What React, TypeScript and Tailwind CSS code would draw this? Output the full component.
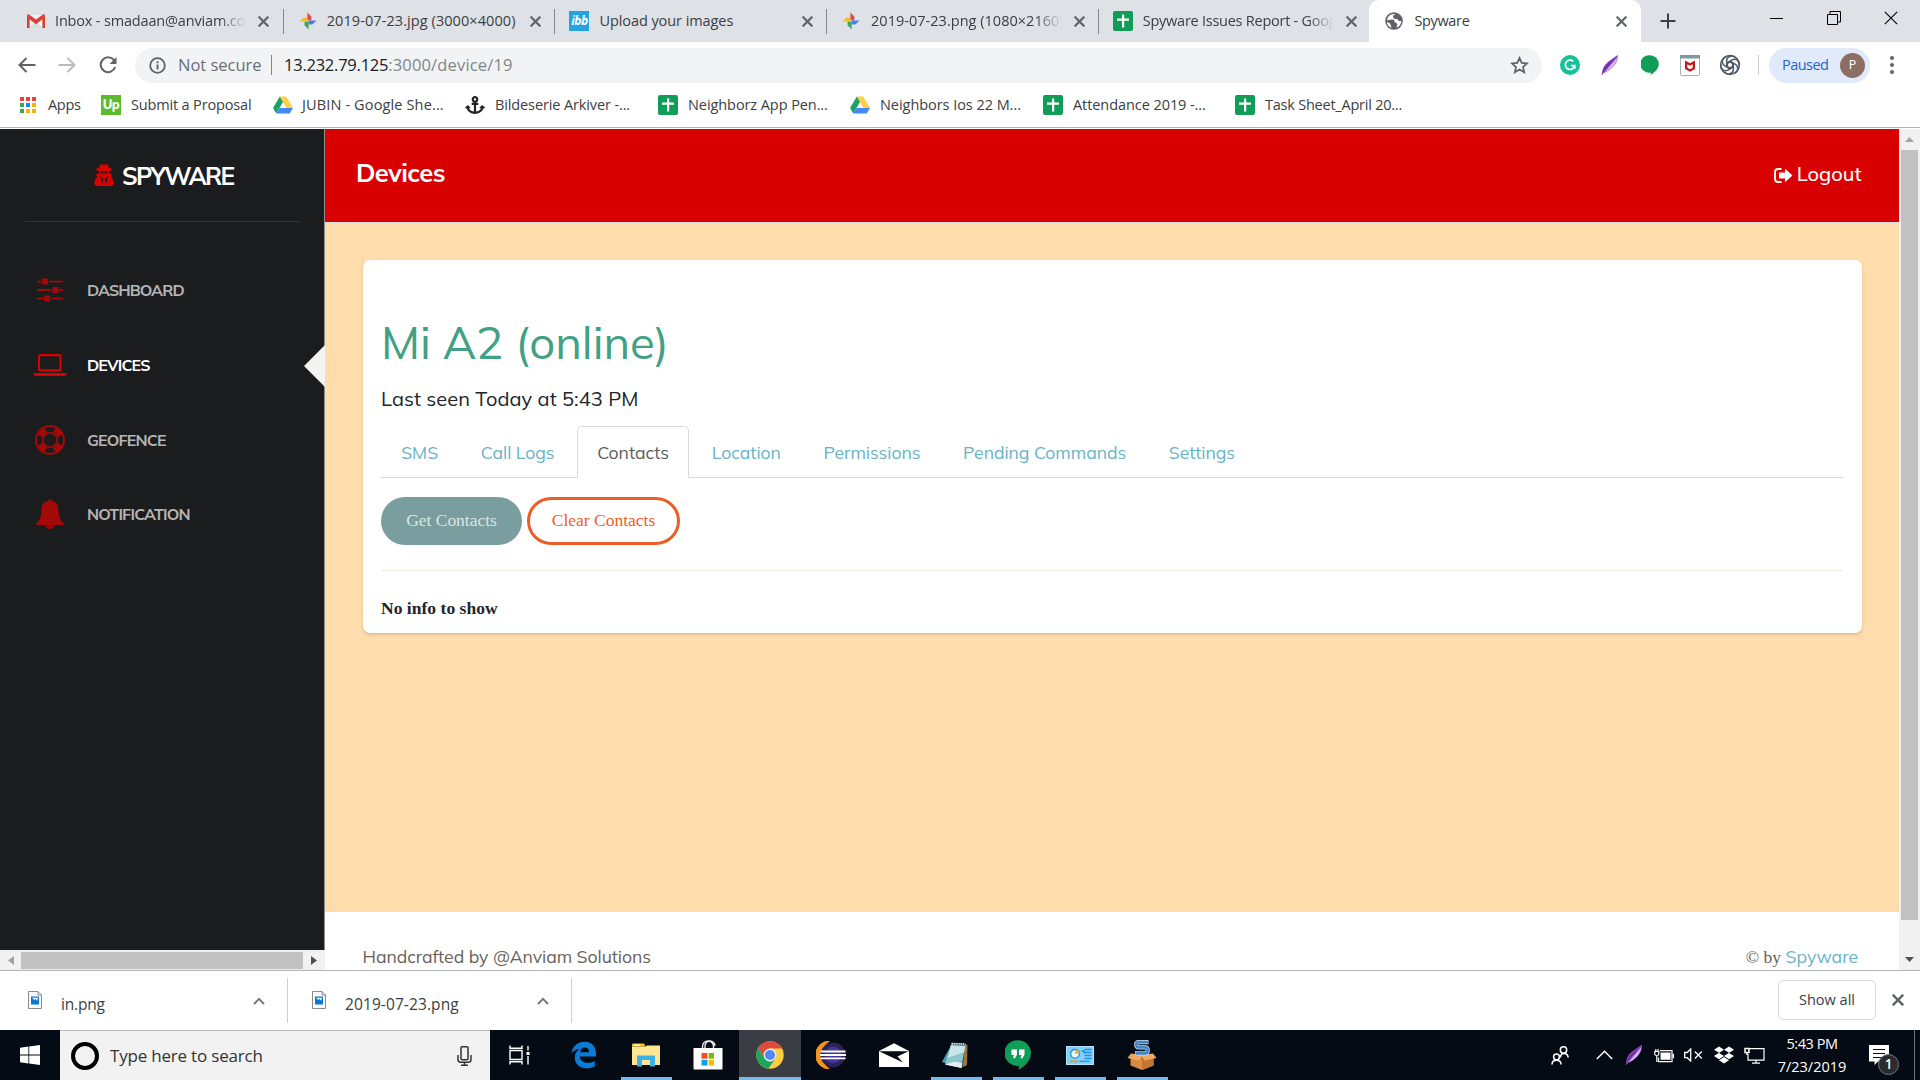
import React from 'react';
import { FaAnchor, FaUserSecret, FaDropbox } from 'react-icons/fa';

const SEGOE = "font-['Open_Sans','Noto_Sans',sans-serif]";
const MULI = "font-['Mulish','Nunito','Open_Sans',sans-serif]";
const SERIF = "font-['Liberation_Serif','Times_New_Roman',serif]";

/* ---------- favicons and browser icons ---------- */

const Gmail = () => (
  <svg width="20" height="20" viewBox="0 0 20 20">
    <path d="M1 4h18v13H1z" fill="#f2f2f2" />
    <path d="M3.5 17L10 10l6.5 7z" fill="#dcdcdc" />
    <path d="M1 17V4.2L10 11l9-6.8V17h-2.6V8.3L10 13.2 3.6 8.3V17z" fill="#d93f35" />
    <path d="M1 4.6Q1 3 3 3.4l7 5.2 7-5.2q2-.4 2 1.2L10 11.4z" fill="#d93f35" />
  </svg>
);

const Photos = () => (
  <svg width="20" height="20" viewBox="0 0 20 20">
    <path d="M9.4 1.500l4 4.200v3.600H9.400z" fill="#e04a3f" />
    <path d="M18.500 9.600l-4.200 4h-3.700v-4z" fill="#4b7bec" />
    <path d="M10.600 18.500l-4-4.200v-3.700h4z" fill="#3fa757" />
    <path d="M1.500 10.400l4.200-4h3.700v4z" fill="#f6bb2b" />
  </svg>
);

const Ibb = () => (
  <span className="flex h-5 w-5 items-center justify-center bg-[#24a3e0] font-['Open_Sans',sans-serif] text-[12px] font-bold italic leading-none tracking-[-0.5px] text-white">
    ibb
  </span>
);

const Sheet = () => (
  <svg width="20" height="20" viewBox="0 0 20 20">
    <rect width="20" height="20" rx="2" fill="#0f9d58" />
    <path d="M9 3.500h2.200v4H16v2.200h-4.800v6.800H9V9.700H4V7.500h5z" fill="#fff" />
  </svg>
);

const Drive = () => (
  <svg width="20" height="20" viewBox="0 0 20 20">
    <path d="M6.800 1.500h6.400L20 13h-6.500z" fill="#ffcf48" />
    <path d="M6.800 1.500L0 13l3.300 5.500L10 7z" fill="#1da462" />
    <path d="M3.300 18.500L6.600 13H20l-3.300 5.500z" fill="#4587f4" />
  </svg>
);

const Globe = () => (
  <svg width="18" height="18" viewBox="0 0 18 18">
    <circle cx="9" cy="9" r="8.800" fill="#5f6368" />
    <path d="M10.500 2.200c-2 .6-2.800 1.800-2.300 3.200.6 1.500 2 1.300 3.400 1.600 1.700.4 1.800 1.900 3 2.200.8.200 1.500-.3 1.700-.8.200 2.700-1.500 6-4.600 7.100-.3-1.400.7-2 .6-3.200-.2-1.400-1.900-1.300-2.600-2.300-.6-1-.1-2-1.300-2.400C6.900 7.200 5.500 7.700 2 8.200 2.500 4.500 6 1.300 10.500 2.200z" fill="#fff" />
    <path d="M1.900 10.200c2 .1 3.300 1.200 3.900 2.700.4 1 .1 2.200.6 3C4 15 2.200 13 1.900 10.200z" fill="#fff" />
  </svg>
);

const AppsGrid = () => (
  <svg width="16" height="16" viewBox="0 0 16 16">
    <path d="M0 0h4v4H0zM6 0h4v4H6zM12 0h4v4h-4z" fill="#ea4335" />
    <path d="M0 6h4v4H0zM0 12h4v4H0z" fill="#34a853" />
    <path d="M6 6h4v4H6z" fill="#1a82f7" />
    <path d="M12 6h4v4h-4zM6 12h4v4H6zM12 12h4v4h-4z" fill="#fbaf08" />
  </svg>
);

const Upwork = () => (
  <span className="flex h-5 w-5 items-center justify-center bg-[#5bbc2e] font-['Nunito','Open_Sans',sans-serif] text-[13px] font-extrabold leading-none tracking-[-0.6px] text-white">
    Up
  </span>
);

const Cross = ({ size = 10, width = 2, color = '#5f6368' }: { size?: number; width?: number; color?: string }) => (
  <svg width={size} height={size} viewBox="0 0 10 10" className="shrink-0">
    <path d="M.6.6l8.800 8.800M9.400.6L.6 9.400" stroke={color} strokeWidth={width} />
  </svg>
);

const Feather = () => (
  <svg width="20" height="22" viewBox="0 0 20 22">
    <path d="M2 20Q2 12 9 7T18 1q0 7-5 12T2 20z" fill="#a868d6" />
    <path d="M18 1Q10 10 2 20 3 13 9 8T18 1z" fill="#6f2da8" />
    <path d="M17 3Q10 12 4.500 18 11 15 14 11t3-8z" fill="#d9bdee" />
    <path d="M1.500 21L17 3" stroke="#8a46bd" strokeWidth="1" />
  </svg>
);

const McAfee = () => (
  <svg width="20" height="21" viewBox="0 0 20 21">
    <rect x=".5" y=".5" width="19" height="20" rx="1" fill="#fff" stroke="#a9adb0" />
    <path d="M0 0h20v3.500H0z" fill="#7f97a5" />
    <path d="M5 5.500l5 2.800 5-2.800V14l-5 2.800L5 14z" fill="#c01818" />
    <path d="M7.300 9.200L10 10.700l2.700-1.500v3.600L10 14.200l-2.700-1.400z" fill="#fff" />
  </svg>
);

const Knot = () => (
  <svg width="22" height="22" viewBox="-11 -11 22 22" fill="none" stroke="#4f5b66" strokeWidth="1.500">
    {[0, 60, 120, 180, 240, 300].map((a) => (
      <path key={a} d="M-3.300 -2 L2.500 -5.300 A5 5 0 0 1 9 1" transform={`rotate(${a})`} />
    ))}
    <circle r="9.400" />
    <circle r="2.800" />
  </svg>
);

/* ---------- tabs ---------- */

const tabs = [
  { icon: <Gmail />, title: 'Inbox - smadaan@anviam.com', cls: 'ml-[9px] tracking-[-0.17px]', fade: true, sep: true },
  { icon: <Photos />, title: '2019-07-23.jpg (3000×4000)', cls: 'ml-[9px] tracking-[0.08px]', fade: false, sep: true },
  { icon: <Ibb />, title: 'Upload your images', cls: 'ml-[10px] tracking-[-0.07px]', fade: false, sep: true },
  { icon: <Photos />, title: '2019-07-23.png (1080×2160)', cls: 'ml-[10px] tracking-[0.02px]', fade: true, sep: true },
  { icon: <Sheet />, title: 'Spyware Issues Report - Google Sheets', cls: 'ml-[10px] tracking-[-0.25px]', fade: true, sep: false },
];

function TabStrip() {
  return (
    <div className="flex h-[42px] bg-[#dee1e6] pl-[11px]">
      {tabs.map((t, i) => (
        <div key={i} className="flex w-[271.7px] shrink-0 items-center pl-[15px]">
          <span className="flex w-[20px] shrink-0 justify-center">{t.icon}</span>
          <span
            className={`w-[191px] shrink-0 overflow-hidden whitespace-nowrap text-[14.5px] text-[#3c4043] ${t.cls} ${
              t.fade ? '[mask-image:linear-gradient(to_right,#000_86%,transparent)]' : ''
            }`}
          >
            {t.title}
          </span>
          <span className="ml-[12px] flex w-[11px] shrink-0">
            <Cross size={11} />
          </span>
          {t.sep && <span className="relative left-px ml-auto h-[25px] w-px shrink-0 bg-[#85898e]" />}
        </div>
      ))}
      <div className="flex w-[272px] shrink-0 items-center rounded-t-[10px] bg-white pl-[16px]">
        <Globe />
        <span className="ml-[11px] w-[191px] text-[14.5px] tracking-[-0.35px] text-[#3c4043]">Spyware</span>
        <span className="ml-[11px] flex">
          <Cross size={11} />
        </span>
      </div>
      <div className="flex w-[54px] items-center justify-center">
        <svg width="16" height="16" viewBox="0 0 16 16">
          <path d="M8 .5v15M.5 8h15" stroke="#3c4043" strokeWidth="2" />
        </svg>
      </div>
      <div className="ml-auto flex h-[36px] items-center pr-px text-black">
        <span className="flex w-[57px] justify-center">
          <span className="h-px w-[13px] bg-black" />
        </span>
        <span className="flex w-[57px] justify-center">
          <svg width="14" height="14" viewBox="0 0 14 14" fill="none" stroke="#000">
            <path d="M.5 3.500h10v10H.5zM3 3.500V.5h10.500V11h-3" />
          </svg>
        </span>
        <span className="flex w-[57px] justify-center">
          <Cross size={14} width={0.8} color="#000" />
        </span>
      </div>
    </div>
  );
}

/* ---------- address bar ---------- */

function Toolbar() {
  return (
    <div className="flex h-[44px] items-center bg-white pl-[7px] pt-[2px]">
      <span className="flex w-[40px] justify-center">
        <svg width="18" height="16" viewBox="0 0 18 16" fill="none" stroke="#5f6368" strokeWidth="2">
          <path d="M17.500 8H2M8.500 1L1.500 8l7 7" />
        </svg>
      </span>
      <span className="flex w-[40px] justify-center">
        <svg width="18" height="16" viewBox="0 0 18 16" fill="none" stroke="#babcbe" strokeWidth="2">
          <path d="M.5 8H16M9.500 1l7 7-7 7" />
        </svg>
      </span>
      <span className="flex w-[41px] justify-center">
        <svg width="18" height="18" viewBox="0 0 18 18" fill="none">
          <path d="M15.200 4.500A7.400 7.400 0 1 0 16.200 11" stroke="#5f6368" strokeWidth="2" />
          <path d="M17.500 1v7h-7z" fill="#5f6368" />
        </svg>
      </span>
      <div className="ml-[7px] flex h-[35px] w-[1407px] items-center rounded-full bg-[#f1f3f4] pl-[14px] pr-[13px] text-[17px]">
        <svg width="17" height="17" viewBox="0 0 17 17" fill="none" stroke="#5f6368">
          <circle cx="8.500" cy="8.500" r="7.300" strokeWidth="1.800" />
          <path d="M8.500 7.500v5M8.500 4.300v1.900" strokeWidth="1.900" />
        </svg>
        <span className="ml-[12px] w-[84px] whitespace-nowrap text-[16.500px] tracking-[-0.020px] text-[#6a6e73]">Not secure</span>
        <span className="ml-[9px] h-[20px] w-px bg-[#80868b]" />
        <span className="ml-[12px] whitespace-nowrap text-[16.500px]">
          <span className="tracking-[-0.24px] text-[#202124]">13.232.79.125</span>
          <span className="tracking-[0.16px] text-[#80868b]">:3000/device/19</span>
        </span>
        <svg className="ml-auto" width="19" height="18" viewBox="0 0 19 18" fill="none" stroke="#5f6368" strokeWidth="1.700">
          <path d="M9.500 1.900l2.200 5 5.300.5-4 3.600 1.200 5.300-4.700-2.800-4.700 2.800L6 11 2 7.400l5.300-.5z" />
        </svg>
      </div>
      <div className="ml-[8px] flex items-center">
        <span className="flex w-[40px] justify-center">
          <span className="flex h-5 w-5 items-center justify-center rounded-full bg-[#15c39a]">
            <svg width="12" height="12" viewBox="0 0 12 12" fill="none" stroke="#fff" strokeWidth="1.700">
              <path d="M9.300 2.300A4.700 4.700 0 1 0 10.700 6.700H7M10.800 9.800V6.700" />
            </svg>
          </span>
        </span>
        <span className="flex w-[40px] justify-center">
          <Feather />
        </span>
        <span className="flex w-[40px] justify-center">
          <svg width="18" height="20" viewBox="0 0 18 20">
            <path d="M9 .2a8.800 8.800 0 0 1 8.800 8.800c0 5-4.500 8.500-8 10.800v-2.200A8.800 8.800 0 1 1 9 .2z" fill="#0f9d58" />
          </svg>
        </span>
        <span className="flex w-[40px] justify-center">
          <McAfee />
        </span>
        <span className="flex w-[40px] justify-center">
          <Knot />
        </span>
        <span className="ml-[8px] h-[20px] w-px bg-[#c8cacd]" />
        <span className="ml-[10px] flex h-[35px] w-[101px] items-center rounded-full bg-[#e1eafa] pl-[13px] pr-[5px]">
          <span className="text-[14.500px] tracking-[-0.550px] text-[#2a63cf]">Paused</span>
          <span className="ml-auto flex h-[25px] w-[25px] items-center justify-center rounded-full bg-[#8d6e63] text-[12.500px] text-white">P</span>
        </span>
        <span className="ml-[20px] flex flex-col gap-[3px]">
          <span className="h-1 w-1 rounded-full bg-[#5f6368]" />
          <span className="h-1 w-1 rounded-full bg-[#5f6368]" />
          <span className="h-1 w-1 rounded-full bg-[#5f6368]" />
        </span>
      </div>
    </div>
  );
}

const bookmarks = [
  { icon: <AppsGrid />, text: 'Apps', cls: 'w-[81px] tracking-[-0.3px]', gap: 'w-[16px] mr-[12px]' },
  { icon: <Upwork />, text: 'Submit a Proposal', cls: 'w-[172px] tracking-[-0.16px]', gap: 'w-[20px] mr-[10px]' },
  { icon: <Drive />, text: 'JUBIN - Google She...', cls: 'w-[192px] tracking-[0.14px]', gap: 'w-[20px] mr-[9px]' },
  { icon: <FaAnchor size={20} color="#222" />, text: 'Bildeserie Arkiver -...', cls: 'w-[193px] tracking-[-0.12px]', gap: 'w-[20px] mr-[10px]' },
  { icon: <Sheet />, text: 'Neighborz App Pen...', cls: 'w-[192px] tracking-[-0.08px]', gap: 'w-[20px] mr-[10px]' },
  { icon: <Drive />, text: 'Neighbors Ios 22 M...', cls: 'w-[193px] tracking-[-0.05px]', gap: 'w-[20px] mr-[10px]' },
  { icon: <Sheet />, text: 'Attendance 2019 -...', cls: 'w-[192px] tracking-[-0.07px]', gap: 'w-[20px] mr-[10px]' },
  { icon: <Sheet />, text: 'Task Sheet_April 20...', cls: 'w-[192px] tracking-[-0.23px]', gap: 'w-[20px] mr-[10px]' },
];

function Bookmarks() {
  return (
    <div className="flex h-[42px] items-start border-b border-[#b4b4b6] bg-white pl-[20px] pt-[8px]">
      {bookmarks.map((b) => (
        <div key={b.text} className={`flex h-[22px] shrink-0 items-center whitespace-nowrap text-[14.5px] text-[#3c4043] ${b.cls}`}>
          <span className={`flex shrink-0 justify-center ${b.gap}`}>{b.icon}</span>
          {b.text}
        </div>
      ))}
    </div>
  );
}

/* ---------- sidebar ---------- */

const Sliders = () => (
  <svg width="26" height="24" viewBox="0 0 26 24" fill="currentColor">
    <path d="M0 2.700h4v1.900H0zM12 2.700h14v1.900H12zM5 .4h6v6H5z" />
    <path d="M0 11h14.500v1.900H0zM22.500 11H26v1.900h-3.500zM15.500 8.900h6v6h-6z" />
    <path d="M0 19.500h6.200v1.900H0zM13.800 19.500H26v1.900H13.800zM7 17.500h6v6H7z" />
  </svg>
);

const Laptop = () => (
  <svg width="34" height="22" viewBox="0 0 34 22" fill="currentColor">
    <path fillRule="evenodd" d="M7.500 0h18.500a2.500 2.500 0 0 1 2.500 2.500v12.500a2.500 2.500 0 0 1-2.500 2.500h-18.500a2.500 2.500 0 0 1-2.500-2.500v-12.500a2.500 2.500 0 0 1 2.500-2.500zM7 2.200v13h19.500v-13z" />
    <path d="M.5 19h33v1q0 2-2.500 2H3Q.5 22 .5 20z" />
  </svg>
);

const LifeRing = () => (
  <svg width="30" height="30" viewBox="-15 -15 30 30">
    <circle r="14" fill="none" stroke="currentColor" strokeWidth="2" />
    <circle r="7.200" fill="none" stroke="currentColor" strokeWidth="1.800" />
    {[45, 135, 225, 315].map((a) => (
      <path key={a} d="M7 -3.700L13.800 -4.700A14.500 14.500 0 0 1 13.800 4.700L7 3.700A8 8 0 0 0 7 -3.700z" transform={`rotate(${a})`} fill="currentColor" />
    ))}
  </svg>
);

const Bell = () => (
  <svg width="28" height="30" viewBox="0 0 28 30" fill="currentColor">
    <path d="M14 0c1 0 1.700.8 1.600 1.800 4.200.8 6.900 4 6.900 8.700 0 7 1.800 11 5.500 14 0 1-.9 1.700-1.800 1.700H1.800C.9 26.200 0 25.500 0 24.500c3.700-3 5.500-7 5.500-14 0-4.700 2.700-7.900 6.900-8.700C12.300.8 13 0 14 0z" />
    <path d="M10 26.800h8a4 3.200 0 0 1-8 0z" />
  </svg>
);

const nav = [
  { icon: <Sliders />, text: 'DASHBOARD', active: false, cls: 'tracking-[-0.970px]' },
  { icon: <Laptop />, text: 'DEVICES', active: true, cls: 'tracking-[-0.820px]' },
  { icon: <LifeRing />, text: 'GEOFENCE', active: false, cls: 'tracking-[-0.820px]' },
  { icon: <Bell />, text: 'NOTIFICATION', active: false, cls: 'tracking-[-0.830px]' },
];

function Sidebar() {
  return (
    <div className="flex w-[325px] shrink-0 flex-col">
      <div className={`flex-1 border-r border-[#8f8f90] bg-[#1b1c1e] ${MULI}`}>
        <div className="ml-[25px] flex h-[93px] w-[275px] items-center border-b border-[#373431] pl-[68px]">
          <FaUserSecret className="text-[#d90000]" size={22} />
          <span className="relative top-px ml-[7px] text-[24.500px] font-bold tracking-[-1.780px] text-white">SPYWARE</span>
        </div>
        <div className="mt-[31px] flex flex-col">
          {nav.map((n) => (
            <div key={n.text} className="relative flex h-[74.700px] items-center pl-[30px]">
              <span className={`flex w-[40px] justify-center ${n.active ? 'text-[#d90000]' : 'text-[#a20909]'}`}>{n.icon}</span>
              <span className={`ml-[17px] text-[16px] font-bold ${n.active ? 'text-white' : 'text-[#b4b4b4]'} ${n.cls}`}>{n.text}</span>
              {n.active && (
                <svg className="absolute -right-px top-[17px]" width="21" height="42" viewBox="0 0 21 42">
                  <path d="M21 0v42L0 21z" fill="#f4f3ef" />
                </svg>
              )}
            </div>
          ))}
        </div>
      </div>
      <div className="flex h-[20px] items-center bg-[#f1f1f1]">
        <span className="flex w-[21px] justify-center">
          <svg width="6" height="9" viewBox="0 0 6 9">
            <path d="M6 0v9L0 4.500z" fill="#a3a3a3" />
          </svg>
        </span>
        <span className="h-[17px] w-[282px] bg-[#c1c1c1]" />
        <span className="flex w-[22px] justify-center">
          <svg width="6" height="9" viewBox="0 0 6 9">
            <path d="M0 0v9l6-4.500z" fill="#505050" />
          </svg>
        </span>
      </div>
    </div>
  );
}

/* ---------- main panel ---------- */

const pageTabs = ['SMS', 'Call Logs', 'Contacts', 'Location', 'Permissions', 'Pending Commands', 'Settings'];

function MainPanel() {
  return (
    <div className={`flex min-w-0 flex-1 flex-col ${MULI}`}>
      <div className="flex h-[94px] items-center justify-between border-b border-[#ddd] bg-[#d90000] pl-[31px] pr-[37.500px] text-white">
        <span className="relative -top-[3px] text-[25.500px] font-bold tracking-[-0.600px]">Devices</span>
        <span className="relative -top-[2px] flex items-center text-[20px] font-medium">
          <svg width="19" height="15" viewBox="0 0 19 15" className="mr-[4px] mt-[3px]">
            <path d="M7.500 1H4Q1 1 1 4v7q0 3 3 3h3.500" fill="none" stroke="#fff" strokeWidth="1.800" />
            <path d="M5 4.600h6V.7L18.500 7.500 11 14.300v-3.900H5z" fill="#fff" />
          </svg>
          Logout
        </span>
      </div>
      <div className="flex-1 bg-[#ffdcab] pl-[37.500px] pr-[37px] pt-[37px]">
        <div className="h-[373px] rounded-[7px] bg-white pl-[18.500px] pr-[19px] shadow-[0_2px_3px_rgba(120,100,80,0.25)]">
          <div className="pt-[51px] text-[45.500px] leading-[62px] tracking-[-0.020px] text-[#42a084]">Mi A2 (online)</div>
          <div className="mt-[11px] text-[20px] font-[370] leading-[30px] tracking-[0.080px] text-[#212529]">Last seen Today at 5:43 PM</div>
          <div className="mt-[12px] flex h-[52px] gap-[2.300px] border-b border-[#dcdcdc]">
            {pageTabs.map((t) => (
              <span
                key={t}
                className={`flex h-[52px] items-center whitespace-nowrap rounded-t-[5px] border px-[19.200px] pt-px text-[17.600px] tracking-[-0.040px] ${
                  t === 'Contacts' ? 'border-[#dcdcdc] border-b-white bg-white text-[#5c5e61]' : 'border-transparent text-[#68b3c8]'
                }`}
              >
                {t}
              </span>
            ))}
          </div>
          <div className={`mt-[19px] flex gap-[5px] text-[17.500px] ${SERIF}`}>
            <span className="flex h-[48px] w-[141px] items-center justify-center rounded-full bg-[#7a9e9f] pb-px tracking-[-0.030px] text-[#dbe4e2]">Get Contacts</span>
            <span className="flex h-[48px] w-[153px] items-center justify-center rounded-full border-[3px] border-[#eb5e28] pb-px text-[#eb5e28]">Clear Contacts</span>
          </div>
          <div className="mt-[25px] h-px bg-[#f0ede1]" />
          <div className={`mt-[26px] text-[17.500px] font-bold leading-[22px] tracking-[0.030px] text-[#212529] ${SERIF}`}>No info to show</div>
        </div>
      </div>
      <div className="flex h-[59px] items-start justify-between border-t border-[#ddd] bg-white pl-[37.500px] pr-[41px] pt-[32px] text-[17.600px] leading-[24px] text-[#66615b]">
        <span className="font-[370] tracking-[-0.050px]">Handcrafted by @Anviam Solutions</span>
        <span>
          <span className={SERIF}>© by </span>
          <span className="text-[#68b3c8]">Spyware</span>
        </span>
      </div>
    </div>
  );
}

function ScrollBar() {
  return (
    <div className="flex w-[21px] shrink-0 flex-col items-center bg-[#f1f1f1]">
      <span className="flex h-[21px] items-center">
        <svg width="9" height="5" viewBox="0 0 9 5">
          <path d="M0 5h9L4.500 0z" fill="#a3a3a3" />
        </svg>
      </span>
      <span className="h-[770px] w-[17px] bg-[#c1c1c1]" />
      <span className="mt-auto flex h-[21px] items-center">
        <svg width="9" height="5" viewBox="0 0 9 5">
          <path d="M0 0h9L4.500 5z" fill="#505050" />
        </svg>
      </span>
    </div>
  );
}

/* ---------- downloads bar ---------- */

const Chevron = () => (
  <svg width="12" height="8" viewBox="0 0 12 8" fill="none" stroke="#777" strokeWidth="1.900">
    <path d="M1 7l5-5.200L11 7" />
  </svg>
);

function Download({ name, cls }: { name: string; cls: string }) {
  return (
    <div className={`flex h-[45px] items-center border-r border-[#cdcfd2] pr-[22px] ${cls}`}>
      <svg width="14" height="18" viewBox="0 0 14 18" className="relative -top-px">
        <path d="M.5.5h9.500l3.500 3.500v13.500H.5z" fill="#fafafa" stroke="#8a8a8a" />
        <path d="M10 .5V4h3.500" fill="none" stroke="#8a8a8a" />
        <path d="M3 5.500h8v8H3z" fill="#0a78d4" />
        <path d="M4 6.800h6l-.8 3-1.700-2L6.300 9z" fill="#fff" />
      </svg>
      <span className="relative top-1 ml-[19px] text-[15.500px] text-[#3c4043]">{name}</span>
      <span className="ml-auto">
        <Chevron />
      </span>
    </div>
  );
}

function DownloadsBar() {
  return (
    <div className="flex h-[60px] items-center border-t border-[#b4b4b6] bg-white">
      <Download name="in.png" cls="w-[288px] pl-[28px] tracking-[-0.200px]" />
      <Download name="2019-07-23.png" cls="w-[284px] pl-[24px] tracking-[0.100px]" />
      <span className="relative -top-px ml-auto mr-[16px] flex h-[40px] w-[98px] items-center justify-center rounded-[5px] border border-[#dadce0] text-[14.500px] font-medium text-[#3c4043]">Show all</span>
      <span className="relative -top-px flex">
        <Cross size={12} />
      </span>
      <span className="w-[16px]" />
    </div>
  );
}

/* ---------- taskbar ---------- */

const Edge = () => (
  <svg width="26" height="28" viewBox="0 0 26 28">
    <path d="M.5 12.500C1.500 5 7 .8 13.500.8 21.500.8 25 6.500 25 12.500v3H8.800c.2 4 3.600 6.300 8 6.300 2.700 0 5-.7 7-1.900v5.300c-2.500 1.400-5.200 2-8.300 2C8.500 27.200 3.800 23 3.800 16.500c0-4 2-7 5.200-8.800-3.500.3-6.500 1.800-8.500 4.800zM9 11.200h9c0-3-1.500-4.700-4.200-4.700C11.300 6.500 9.500 8.300 9 11.200z" fill="#0b7bd8" />
  </svg>
);

const Explorer = () => (
  <svg width="28" height="24" viewBox="0 0 28 24">
    <path d="M0 1.500Q0 .5 1 .5h11l1.500 3H0z" fill="#f9c513" />
    <path d="M2 1.500h6v1.500H2z" fill="#fff8dc" />
    <path d="M0 3.500h13.500L15 2.500h13V22H0z" fill="#ffe692" />
    <path d="M5 12.500h18V23.500h-5V17H10v6.500H5z" fill="#3bb3e8" />
  </svg>
);

const Store = () => (
  <svg width="30" height="30" viewBox="0 0 30 30">
    <path d="M9.500 8V6.500a5.500 5.500 0 0 1 11 0V8M12 8V6a5 5 0 0 1 10 0" fill="none" stroke="#e8e8e8" strokeWidth="1.400" />
    <path d="M.5 8h29v20.500q0 1-1 1h-27q-1 0-1-1z" fill="#fff" />
    <path d="M8.500 13h6v5.700h-6z" fill="#f25022" />
    <path d="M15.700 13h5.300v5.700h-5.300z" fill="#7fba00" />
    <path d="M8.500 19.800h6v5.700h-6z" fill="#00a4ef" />
    <path d="M15.700 19.800h5.300v5.700h-5.300z" fill="#ffb900" />
  </svg>
);

const ChromeLogo = () => (
  <svg width="28" height="28" viewBox="-14 -14 28 28">
    <circle r="13.700" fill="#ffcd41" />
    <path d="M-11.900 -6.900A13.700 13.700 0 0 1 12 -6.400H0L-5.700 3.200z" fill="#dd4b3e" />
    <path d="M-11.900 -6.900A13.700 13.700 0 0 0 -1.500 13.600L5.600 3.200 0 6.400-5.500 3.200z" fill="#1da462" />
    <circle r="6.400" fill="#f1f1f1" />
    <circle r="5.100" fill="#4c8bf5" />
  </svg>
);

const Eclipse = () => (
  <svg width="30" height="28" viewBox="0 0 30 28" className="relative -left-px">
    <path d="M13.500 0A14 14 0 0 0 13.500 28A17 17 0 0 1 13.500 0z" fill="#f7941e" stroke="#f7941e" strokeWidth=".8" />
    <circle cx="17" cy="14" r="12.500" fill="#2c2255" />
    <circle cx="17" cy="14" r="8.500" fill="#43359a" />
    <path d="M4.500 9.600h25v1.900h-25zM4 13h26v1.900H4zM4.500 16.400h25v1.900h-25z" fill="#fff" />
  </svg>
);

const Mail = () => (
  <svg width="30" height="24" viewBox="0 0 30 24">
    <path d="M0 8L15 .2 30 8v16H0z" fill="#fff" />
    <path d="M0 8.200h29.500L18.500 13.500l5.500 6z" fill="#050b14" />
  </svg>
);

const Notepad = () => (
  <svg width="28" height="28" viewBox="0 0 28 28" className="relative -left-px">
    <path d="M24 3l2.500 1-.5 20-4.500 2.500z" fill="#9b7440" />
    <path d="M11 3L.8 21l7 2z" fill="#4d9dad" />
    <path d="M10.500 2L24.500 3 20.500 27 4 23.500z" fill="#8cc5d0" />
    <path d="M10.500 2L24.500 3l-1.200 8L6.500 17z" fill="#c8e6ea" />
    <path d="M10.500 1.500l14 1-.5 2.500-14-.8z" fill="#6c7880" />
    <path d="M11 2.800h13" stroke="#e8eef0" strokeWidth="1.500" strokeDasharray="1 1.200" />
    <path d="M4 23.500l10-3 7.500 2-1 4.500z" fill="#e6eff0" />
  </svg>
);

const Hangouts = () => (
  <svg width="26" height="30" viewBox="0 0 26 30">
    <path d="M13 .2a12.900 12.900 0 0 1 13 12.900C26 20.500 19.500 26.500 13.800 29.800v-3.900A12.900 12.900 0 1 1 13 .2z" fill="#0f9d58" />
    <path d="M6.500 9.500h5.500v5l-2 3.800H8l1-3.300H6.500zM14 9.500h5.500v5l-2 3.800h-2l1-3.300H14z" fill="#fff" />
  </svg>
);

const Panel = () => (
  <svg width="28" height="19" viewBox="0 0 28 19">
    <rect x=".5" y=".5" width="27" height="18" fill="#7fd0fa" stroke="#aee4ff" />
    <circle cx="9" cy="7.800" r="4.300" fill="#eaf7ff" stroke="#2490d8" strokeWidth="1.300" />
    <path d="M9 7.800V3.500a4.300 4.300 0 0 1 4.300 4.300z" fill="#f5b52e" />
    <path d="M15.500 5h2.500v2.500M18.500 3.500h7M18.500 6.500h7M18.500 9.500h7M18.500 12.500h7" stroke="#2490d8" strokeWidth="1.300" fill="none" />
    <path d="M4 15.300h8" stroke="#f09a1a" strokeWidth="1.800" />
    <path d="M13.500 15.300h10" stroke="#2490d8" strokeWidth="1.200" />
  </svg>
);

const BoxS = () => (
  <svg width="30" height="30" viewBox="0 0 30 30">
    <path d="M3.500 16L15 18.500 26.500 16v9.500L15 30 3.500 25.500z" fill="#d98b41" />
    <path d="M15 18.500L26.500 16v9.500L15 30z" fill="#c27630" />
    <path d="M4 13.500L15 15l11-1.500L29.500 18 18 20.500l-3-3-3 3L.5 18z" fill="#f0a860" />
    <path d="M21.500 2.200h-9.800q-2.500 0-2.500 2.600t2.500 2.600h6.500q2.500 0 2.500 3t-2.500 3H8" fill="none" stroke="#c9dcee" strokeWidth="4.200" />
    <path d="M21 2.200h-9.300q-2.500 0-2.500 2.600t2.500 2.600h6.500q2.500 0 2.500 3t-2.500 3H8.500" fill="none" stroke="#3f86c6" strokeWidth="2.700" />
  </svg>
);

const apps = [
  { icon: <Edge />, state: '' },
  { icon: <Explorer />, state: 'open' },
  { icon: <Store />, state: '' },
  { icon: <ChromeLogo />, state: 'active' },
  { icon: <Eclipse />, state: '' },
  { icon: <Mail />, state: '' },
  { icon: <Notepad />, state: 'open' },
  { icon: <Hangouts />, state: 'open' },
  { icon: <Panel />, state: 'open' },
  { icon: <BoxS />, state: 'open' },
];

function Taskbar() {
  return (
    <div className="flex h-[50px] bg-[#050b14] text-white">
      <div className="flex w-[60px] items-center justify-center">
        <svg width="20" height="20" viewBox="0 0 20 20" fill="#fff">
          <path d="M0 2.800L8.400 1.500v8.100H0zM9.200 1.400L20 0v9.600H9.200zM0 10.400h8.400v8.100L0 17.200zM9.200 10.400H20V20L9.200 18.600z" />
        </svg>
      </div>
      <div className="flex w-[430px] items-center border-t border-[#bbb] bg-[#f2f2f2] pl-[11px]">
        <span className="h-[28px] w-[28px] rounded-full border-[4px] border-black" />
        <span className="ml-[11px] text-[17px] tracking-[-0.200px] text-[#333]">Type here to search</span>
        <svg className="ml-auto mr-[18px]" width="15" height="20" viewBox="0 0 15 20" fill="none" stroke="#333" strokeWidth="1.500">
          <rect x="4" y=".8" width="7" height="13" rx="1" />
          <path d="M1 9v4.500q0 2.700 2.500 2.700h8q2.500 0 2.500-2.700V9M7.500 16.500v2.800M4 19.200h7" />
        </svg>
      </div>
      <div className="flex w-[63px] items-center pl-[19px]">
        <svg width="21" height="20" viewBox="0 0 21 20" fill="none" stroke="#fff" strokeWidth="1.400">
          <path d="M1 .5v2.700h12V.5M1 19.500v-2.700h12v2.700M1 5.500h12v9H1zM19 1v4.500M19 11v8.500" />
          <path d="M17.500 7h3v3h-3z" fill="#fff" stroke="none" />
        </svg>
      </div>
      {apps.map((a, i) => (
        <div key={i} className={`flex w-[62px] flex-col items-center ${a.state === 'active' ? 'bg-[#3a3e44]' : ''}`}>
          <span className="flex h-[47px] items-center pt-[3px]">{a.icon}</span>
          {a.state !== '' && <span className={`h-[3px] bg-[#76b9ed] ${a.state === 'active' ? 'w-[62px]' : 'w-[51px]'}`} />}
        </div>
      ))}
      <div className="ml-auto flex items-center">
        <span className="flex w-[48px] justify-center">
          <svg width="18" height="19" viewBox="0 0 18 19" fill="none" stroke="#fff" strokeWidth="1.500">
            <circle cx="12.500" cy="4" r="3.200" />
            <path d="M9.500 11.500q0-4 3.500-4t4.300 4" />
            <circle cx="5.500" cy="11" r="2.900" />
            <path d="M1 18.500q0-4.300 4.500-4.300T10 18.500" />
          </svg>
        </span>
        <span className="flex w-[40px] justify-center">
          <svg width="17" height="10" viewBox="0 0 17 10" fill="none" stroke="#fff" strokeWidth="1.500">
            <path d="M.8 9l7.700-7.700L16.200 9" />
          </svg>
        </span>
        <span className="flex w-[20px] justify-center">
          <Feather />
        </span>
        <span className="flex w-[39px] justify-center">
          <svg width="20" height="15" viewBox="0 0 20 15" fill="none" stroke="#fff" strokeWidth="1.200">
            <path d="M6 2.600h12v11H4.500V9.500" />
            <path d="M6.500 4.500h10v7.300H6.500z" fill="#fff" stroke="none" />
            <path d="M19.300 5.800v4.500" strokeWidth="1.500" />
            <path d="M.8 3.500h4v2.500Q4.800 7.500 2.800 7.500T.8 6zM1.800 1v2M4 1v2M2.800 7.500V14" />
          </svg>
        </span>
        <span className="flex w-[20px] justify-center">
          <svg width="19" height="14" viewBox="0 0 19 14" fill="none" stroke="#fff" strokeWidth="1.300">
            <path d="M.7 4.500h2.500L6.700 1v12L3.200 9.700H.7z" />
            <path d="M10.800 3.500l7 7M17.800 3.500l-7 7" />
          </svg>
        </span>
        <span className="flex w-[41px] justify-center">
          <FaDropbox size={20} />
        </span>
        <span className="flex w-[21px] justify-center">
          <svg width="21" height="17" viewBox="0 0 21 17" fill="none" stroke="#fff" strokeWidth="1.200">
            <path d="M5 1.600h15v11.500H4V7M12 13.100v3M8 16.200h8" />
            <path d="M1 1.600h4v4H1zM3 5.600V8" strokeWidth="1.500" />
          </svg>
        </span>
        <span className="ml-[12px] flex w-[70px] flex-col items-center whitespace-nowrap text-[14.500px] leading-[23px]">
          <span className="tracking-[-0.440px]">5:43 PM</span>
          <span>7/23/2019</span>
        </span>
        <span className="relative ml-[22px] h-[20px] w-[30px]">
          <svg width="20" height="20" viewBox="0 0 20 20">
            <path d="M0 0h20v16.500H9L5.500 20v-3.500H0z" fill="#fff" />
            <path d="M4 4.500h12M4 8.500h12M4 12.500h12" stroke="#050b14" strokeWidth="1.200" />
          </svg>
          <span className="absolute left-[9px] top-[9px] flex h-[21px] w-[21px] items-center justify-center rounded-full border border-[#77797c] bg-[#2a2b2e] text-[13.500px] font-semibold leading-none">1</span>
        </span>
        <span className="ml-[15px] h-[50px] w-px bg-[#6b7178]" />
        <span className="w-[5px]" />
      </div>
    </div>
  );
}

export default function App() {
  return (
    <div className={`flex h-[1080px] w-[1920px] flex-col overflow-hidden bg-white ${SEGOE}`}>
      <TabStrip />
      <Toolbar />
      <div className="h-[43px]">
        <Bookmarks />
      </div>
      <div className="flex h-[841px] overflow-hidden">
        <Sidebar />
        <MainPanel />
        <ScrollBar />
      </div>
      <DownloadsBar />
      <Taskbar />
    </div>
  );
}
